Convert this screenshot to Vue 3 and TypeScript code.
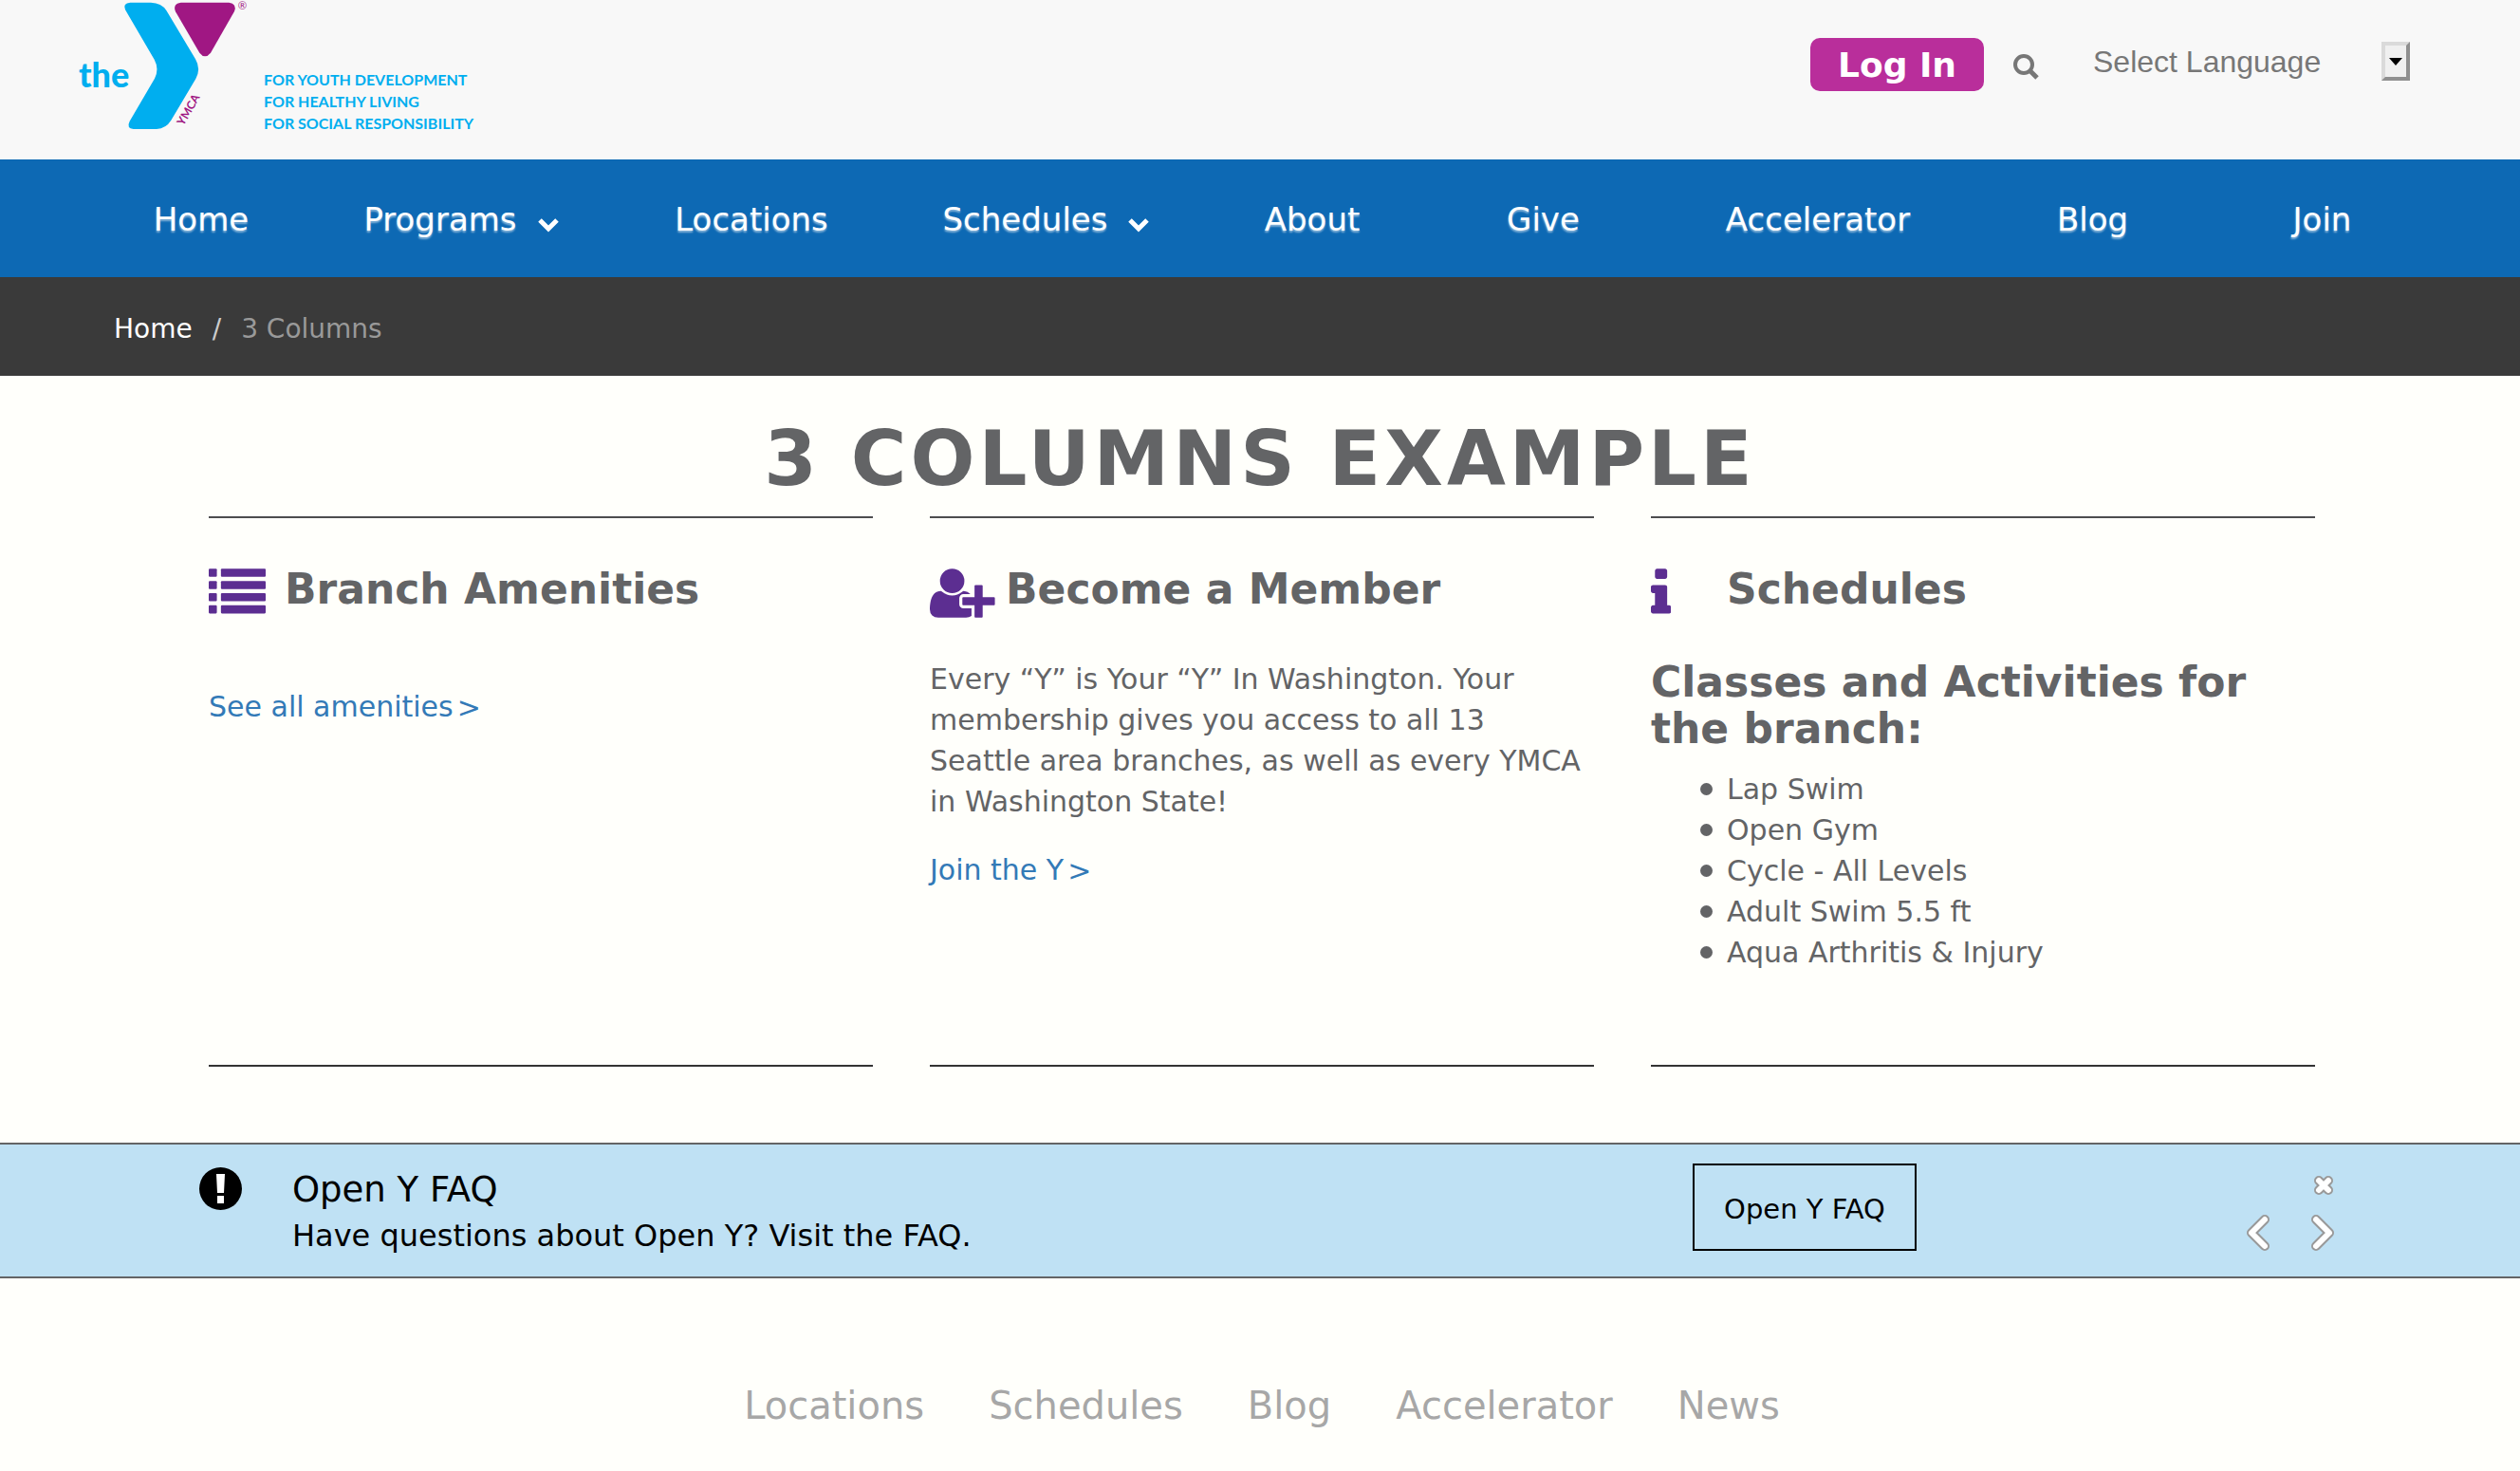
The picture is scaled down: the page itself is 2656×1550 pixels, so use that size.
<script setup lang="ts">
interface NavItem {
  label: string
  menu?: boolean
}

const navItems: NavItem[] = [
  { label: 'Home' },
  { label: 'Programs', menu: true },
  { label: 'Locations' },
  { label: 'Schedules', menu: true },
  { label: 'About' },
  { label: 'Give' },
  { label: 'Accelerator' },
  { label: 'Blog' },
  { label: 'Join' },
]

const activities: string[] = [
  'Lap Swim',
  'Open Gym',
  'Cycle - All Levels',
  'Adult Swim 5.5 ft',
  'Aqua Arthritis & Injury',
]

const listRows: number[] = [128, 512, 896, 1280]

const footerLinks: string[] = ['Locations', 'Schedules', 'Blog', 'Accelerator', 'News']
</script>

<template>
  <div class="page">
    <header class="top">
      <a class="brand" href="#" aria-label="the YMCA">
        <svg class="logo" viewBox="0 0 654 504" aria-hidden="true">
          <path
            fill="#00aeef"
            d="M232 8H297Q331 9 346 33L438 187Q456 218 439 249L361 380Q345 406 315 408H242Q219 405 230 383L309 248Q324 218 308 188L216 31Q207 10 232 8Z"
          />
          <path
            fill="#a01783"
            d="M392 8H544Q570 12 561 36L486 167Q468 189 451 167L375 37Q365 12 392 8Z"
          />
          <text class="logo-the" x="69" y="275">the</text>
          <text class="logo-ymca" transform="translate(400 399) rotate(-60)">YMCA</text>
          <text class="logo-reg" x="572" y="31">®</text>
        </svg>
        <span class="tagline">
          <span>FOR YOUTH DEVELOPMENT</span>
          <span>FOR HEALTHY LIVING</span>
          <span>FOR SOCIAL RESPONSIBILITY</span>
        </span>
      </a>

      <div class="actions">
        <button class="login" type="button">Log In</button>
        <button class="search" type="button" aria-label="Search">
          <svg viewBox="0 0 28 28" width="28" height="28" aria-hidden="true">
            <circle cx="12" cy="12" r="9" fill="none" stroke="#777" stroke-width="4" />
            <path d="M18 18L26 26" stroke="#777" stroke-width="5" />
          </svg>
        </button>
        <div class="language">
          <select aria-label="Select Language">
            <option>Select Language</option>
          </select>
          <span class="arrow" aria-hidden="true">
            <svg viewBox="0 0 14 8" width="14" height="8"><path d="M0 0H14L7 8Z" /></svg>
          </span>
        </div>
      </div>
    </header>

    <nav class="main-nav" aria-label="Main">
      <a v-for="item in navItems" :key="item.label" href="#">
        {{ item.label }}
        <svg v-if="item.menu" class="caret" viewBox="0 0 22 16" aria-hidden="true">
          <path d="M2 3L11 12L20 3" fill="none" stroke="#fff" stroke-width="5" />
        </svg>
      </a>
    </nav>

    <nav class="crumbs" aria-label="Breadcrumb">
      <a href="#">Home</a>
      <span class="slash">/</span>
      <span class="current">3 Columns</span>
    </nav>

    <main>
      <h1>3 COLUMNS EXAMPLE</h1>
      <div class="columns">
        <section class="column">
          <div class="head">
            <svg class="icon" viewBox="0 0 1792 1792" aria-hidden="true">
              <g v-for="y in listRows" :key="y">
                <rect x="0" :y="y" width="256" height="256" rx="32" />
                <rect x="384" :y="y" width="1408" height="256" rx="32" />
              </g>
            </svg>
            <h2>Branch Amenities</h2>
          </div>
          <a class="more" href="#">See all amenities<span>&gt;</span></a>
        </section>

        <section class="column">
          <div class="head">
            <svg class="icon" viewBox="0 0 2048 1792" aria-hidden="true">
              <path
                d="M704 896q-159 0-271.500-112.500t-112.500-271.500 112.500-271.500 271.500-112.500 271.500 112.500 112.500 271.500-112.500 271.500-271.500 112.500zm960 128h352q13 0 22.500 9.500t9.500 22.500v192q0 13-9.500 22.500t-22.500 9.500h-352v352q0 13-9.500 22.500t-22.500 9.500h-192q-13 0-22.500-9.500t-9.500-22.500v-352h-352q-13 0-22.500-9.500t-9.500-22.500v-192q0-13 9.500-22.500t22.500-9.500h352v-352q0-13 9.500-22.500t22.500-9.500h192q13 0 22.500 9.500t9.500 22.500v352zm-736 224q0 52 38 90t90 38h256v238q-68 50-171 50h-874q-121 0-194-69t-73-190q0-53 3.500-103.500t14-109 26.500-108.500 43-97.500 62-81 85.500-53.500 111.500-20q19 0 39 17 79 61 154.500 91.500t164.500 30.500 164.500-30.500 154.500-91.500q20-17 39-17 132 0 217 96h-223q-52 0-90 38t-38 90v192z"
              />
            </svg>
            <h2>Become a Member</h2>
          </div>
          <p>
            Every “Y” is Your “Y” In Washington. Your membership gives you access to all 13
            Seattle area branches, as well as every YMCA in Washington State!
          </p>
          <a class="more" href="#">Join the Y<span>&gt;</span></a>
        </section>

        <section class="column">
          <div class="head">
            <svg class="icon" viewBox="576 0 640 1792" aria-hidden="true">
              <path
                d="M1216 1344v128q0 26-19 45t-45 19h-512q-26 0-45-19t-19-45v-128q0-26 19-45t45-19h64v-384h-64q-26 0-45-19t-19-45v-128q0-26 19-45t45-19h384q26 0 45 19t19 45v576h64q26 0 45 19t19 45zm-128-1152v192q0 26-19 45t-45 19h-256q-26 0-45-19t-19-45v-192q0-26 19-45t45-19h256q26 0 45 19t19 45z"
              />
            </svg>
            <h2>Schedules</h2>
          </div>
          <h3>Classes and Activities for the branch:</h3>
          <ul>
            <li v-for="activity in activities" :key="activity">{{ activity }}</li>
          </ul>
        </section>
      </div>
    </main>

    <section class="alert" aria-label="Notice">
      <svg class="alert-icon" viewBox="0 0 45 45" aria-hidden="true">
        <circle cx="22.5" cy="22.5" r="22.5" />
        <path fill="#fff" d="M18 7H27L26 27H19ZM19 30H26V38H19Z" />
      </svg>
      <div class="alert-text">
        <div class="alert-title">Open Y FAQ</div>
        <div class="alert-body">Have questions about Open Y? Visit the FAQ.</div>
      </div>
      <a class="alert-link" href="#">Open Y FAQ</a>
      <div class="alert-controls">
        <button class="close" type="button" aria-label="Close">
          <svg viewBox="0 0 22 22" width="22" height="22" aria-hidden="true">
            <path class="edge" d="M6 6L16 16M16 6L6 16" />
            <path class="fill" d="M6 6L16 16M16 6L6 16" />
          </svg>
        </button>
        <div class="pager">
          <button type="button" aria-label="Previous">
            <svg viewBox="0 0 24 38" width="24" height="38" aria-hidden="true">
              <path class="edge" d="M19 5L5 19L19 33" />
              <path class="fill" d="M19 5L5 19L19 33" />
            </svg>
          </button>
          <button type="button" aria-label="Next">
            <svg viewBox="0 0 24 38" width="24" height="38" aria-hidden="true">
              <path class="edge" d="M5 5L19 19L5 33" />
              <path class="fill" d="M5 5L19 19L5 33" />
            </svg>
          </button>
        </div>
      </div>
    </section>

    <footer class="footer">
      <a v-for="link in footerLinks" :key="link" href="#">{{ link }}</a>
    </footer>
  </div>
</template>

<style>
body {
  margin: 0;
  background: #fffffb;
}
</style>

<style scoped>
.page {
  font-family: Verdana, 'DejaVu Sans', sans-serif;
  font-size: 30px;
  line-height: 43px;
  color: #636466;
}

.page a {
  text-decoration: none;
}

.page button {
  padding: 0;
  border: 0;
  background: none;
  font-family: inherit;
}

.page svg {
  display: block;
  flex: none;
}

.top {
  display: flex;
  justify-content: space-between;
  align-items: flex-start;
  padding: 0 116px 0 60px;
  background: #f8f8f8;
}

.brand {
  display: flex;
}

.logo {
  width: 218px;
  height: 168px;
}

.logo-the {
  font: 900 108px Lato, sans-serif;
  fill: #00aeef;
}

.logo-ymca {
  font: 700 36px Lato, sans-serif;
  fill: #a01783;
}

.logo-reg {
  font: 400 34px Lato, sans-serif;
  fill: #a01783;
}

.tagline {
  display: flex;
  flex-direction: column;
  padding-top: 72px;
  font: 700 16px/23px Lato, sans-serif;
  color: #00aeef;
}

.actions {
  display: flex;
  align-items: flex-start;
  padding-top: 40px;
}

.page .login {
  padding: 2px 29px 0;
  border-radius: 10px;
  background: #b92e9b;
  color: #fff;
  font-size: 36px;
  font-weight: 700;
  line-height: 54px;
}

.page .search {
  display: flex;
  align-items: center;
  height: 60px;
  margin: 0 57px 0 30px;
}

.language {
  position: relative;
  display: flex;
}

.language select {
  appearance: none;
  width: 334px;
  height: 50px;
  padding: 0;
  border: 0;
  background: transparent;
  color: #777;
  font: 32px/50px 'Liberation Sans', Arial, sans-serif;
}

.arrow {
  position: absolute;
  top: 4px;
  right: 0;
  display: flex;
  align-items: center;
  justify-content: center;
  width: 22px;
  height: 33px;
  border: 4px solid;
  border-color: #dadada #8f8f8f #8f8f8f #dadada;
  background: #f0f0f0;
  pointer-events: none;
}

.main-nav {
  display: grid;
  grid-template-columns: 218fr 330fr 282fr 339fr 222fr 265fr 314fr 265fr 219fr;
  padding: 2px 99px 0 103px;
  background: #0d69b4;
}

.main-nav a {
  display: flex;
  align-items: center;
  justify-content: center;
  gap: 22px;
  color: #fff;
  font-size: 34px;
  line-height: 122px;
  text-shadow: 0 2px 2px rgba(255, 255, 255, 0.5);
}

.caret {
  width: 22px;
  height: 16px;
  margin-top: 12px;
}

.crumbs {
  display: flex;
  gap: 21px;
  padding: 34px 120px 28px;
  background: #3a3a3a;
  font-size: 28px;
  line-height: 42px;
}

.crumbs a {
  color: #fff;
}

.slash {
  color: #ccc;
}

.current {
  color: #999;
}

h1,
h2,
h3,
p,
ul {
  margin: 0;
}

h1 {
  padding: 44px 0 16px;
  font-size: 80px;
  line-height: 88px;
  letter-spacing: 4px;
  text-align: center;
}

.columns {
  display: grid;
  grid-template-columns: repeat(3, 1fr);
  gap: 60px;
  padding: 0 216px 80px 220px;
}

.column {
  display: flex;
  flex-direction: column;
  padding: 49px 0 97px;
  border-top: 2px solid #4d4d4f;
  border-bottom: 2px solid #333;
}

.head {
  display: grid;
  grid-template-columns: 80px 1fr;
  align-items: start;
  margin-bottom: 39px;
}

.icon {
  height: 60px;
  fill: #5c2e91;
}

h2,
h3 {
  font-size: 44px;
}

h2 {
  line-height: 52px;
}

h3 {
  line-height: 49px;
  margin-bottom: 18px;
}

.more {
  display: flex;
  align-self: flex-start;
  gap: 4px;
  margin-top: 29px;
  color: #337ab7;
}

.more span {
  padding-top: 1px;
}

ul {
  padding: 0 0 0 52px;
  list-style: none;
}

li {
  display: flex;
  align-items: center;
  gap: 15px;
}

li::before {
  content: '';
  width: 13px;
  height: 13px;
  border-radius: 50%;
  background: #636466;
}

.alert {
  display: flex;
  align-items: flex-start;
  padding: 20px 196px 20px 210px;
  border-top: 2px solid #636466;
  border-bottom: 2px solid #636466;
  background: #bfe1f4;
  color: #000;
}

.alert-icon {
  width: 45px;
  height: 45px;
  margin: 4px 51px 0 0;
}

.alert-text {
  flex: 1;
  padding: 3px 0 0 2px;
}

.alert-title {
  font-size: 37px;
  line-height: 50px;
}

.alert-body {
  font-size: 32px;
  line-height: 46px;
}

.alert-link {
  width: 232px;
  margin-right: 348px;
  padding-top: 4px;
  border: 2px solid #000;
  color: #000;
  font-size: 29px;
  line-height: 84px;
  text-align: center;
}

.alert-controls {
  display: flex;
  flex-direction: column;
  align-items: flex-end;
  gap: 20px;
  padding-top: 12px;
}

.pager {
  display: flex;
  gap: 44px;
}

.edge,
.fill {
  fill: none;
  stroke-linecap: round;
  stroke-linejoin: round;
}

.edge {
  stroke: #999;
  stroke-width: 10px;
}

.fill {
  stroke: #fff;
  stroke-width: 6px;
}

.footer {
  display: flex;
  justify-content: center;
  gap: 68px;
  padding: 106px 0 41px 4px;
  font-size: 40px;
  line-height: 56px;
}

.footer a {
  color: #a7a7a7;
}
</style>
